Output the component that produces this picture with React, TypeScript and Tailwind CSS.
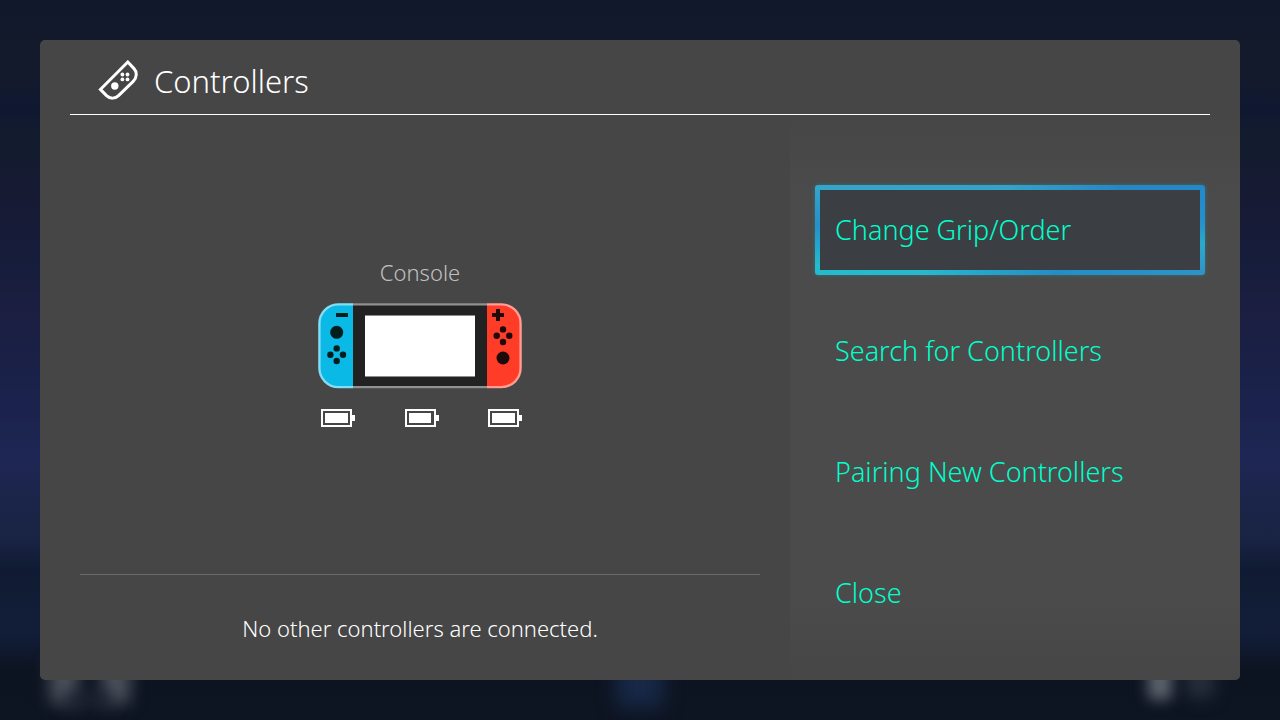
type Action = { label: string; active?: boolean };

const actions: Action[] = [
  { label: "Change Grip/Order", active: true },
  { label: "Search for Controllers" },
  { label: "Pairing New Controllers" },
  { label: "Close" },
];

function ControllerIcon() {
  return (
    <svg width="42" height="42" viewBox="0 0 42 42" fill="none" aria-hidden="true">
      <path
        d="M29.8 2 L2.4 29.4 L8.5 35.6 C12 39 17.2 39 20.8 35.4 L35.2 21.4 C39 17.6 39.2 12 36 8.6 Z"
        stroke="#fff"
        strokeWidth="3"
      />
      <circle cx="16.8" cy="26" r="3.7" fill="#fff" />
      <circle cx="24.4" cy="14.5" r="1.9" fill="#fff" />
      <circle cx="29.5" cy="14.5" r="1.9" fill="#fff" />
      <circle cx="24.4" cy="19.4" r="1.9" fill="#fff" />
      <circle cx="29.5" cy="19.4" r="1.9" fill="#fff" />
    </svg>
  );
}

function ConsoleDrawing() {
  return (
    <svg width="204" height="86" viewBox="0 0 204 86" role="img" aria-label="Console">
      <defs>
        <clipPath id="body">
          <rect x="0.3" y="0.3" width="203.4" height="84.9" rx="20" />
        </clipPath>
      </defs>
      <g clipPath="url(#body)">
        <rect width="204" height="86" fill="#222" />
        <rect width="35" height="86" fill="#0ab9e6" />
        <rect x="169" width="35" height="86" fill="#ff3c28" />
      </g>
      <rect x="1.4" y="1.4" width="201.2" height="82.7" rx="19" fill="none" stroke="#fff" strokeOpacity="0.5" strokeWidth="2.4" />
      <rect x="47" y="12" width="110" height="62" fill="#8c8c8c" />
      <rect x="47" y="13" width="110" height="60" fill="#fff" />
      <g fill="#001e1e">
        <rect x="18" y="10" width="12" height="4" />
        <circle cx="18.7" cy="29.3" r="6.5" />
        <circle cx="18.7" cy="45.4" r="3.2" />
        <circle cx="12.4" cy="51.7" r="3.2" />
        <circle cx="25" cy="51.7" r="3.2" />
        <circle cx="18.7" cy="58" r="3.2" />
      </g>
      <g fill="#1e0a0a">
        <path d="M178 6h4v4h4v4h-4v4h-4v-4h-4v-4h4z" />
        <circle cx="185" cy="26.4" r="3.2" />
        <circle cx="178.7" cy="32.7" r="3.2" />
        <circle cx="191.3" cy="32.7" r="3.2" />
        <circle cx="185" cy="39" r="3.2" />
        <circle cx="185" cy="55" r="6.5" />
      </g>
    </svg>
  );
}

function Battery({ level, label }: { level: number; label: string }) {
  return (
    <svg width="34" height="18" viewBox="0 0 34 18" role="img" aria-label={label}>
      <rect x="1" y="1" width="29" height="16" fill="none" stroke="#fff" strokeWidth="2" />
      <rect x="31" y="6" width="3" height="6" fill="#fff" />
      <rect x="4" y="4" width={level} height="10" fill="#fff" />
    </svg>
  );
}

function ActionButton({ label, active }: Action) {
  if (active) {
    return (
      <div className="rounded-[3px] bg-[linear-gradient(90deg,#33a6ca_0%,#32a3c9_50%,#2787c6_78%,#2388cc_100%),linear-gradient(90deg,#22bccd_0%,#28b8cd_28%,#238ec6_62%,#2f93c6_100%),linear-gradient(180deg,#33a6ca_0%,#2490cc_45%,#22bccd_90%),linear-gradient(180deg,#2388cc_0%,#2490cc_40%,#2ba8cd_65%,#2f93c6_100%)] bg-[size:100%_5px,100%_5px,5px_100%,5px_100%] bg-[position:top,bottom,left,right] bg-no-repeat p-[5px] shadow-[0_0_5px_rgba(40,170,190,0.35)]">
        <button
          type="button"
          className="flex h-20 w-full items-center bg-[#3b3f43] px-[15px] text-left text-[#0fc]"
        >
          {label}
        </button>
      </div>
    );
  }
  return (
    <button type="button" className="flex h-[90px] w-full items-center px-5 text-left text-[#0fc]">
      {label}
    </button>
  );
}

export default function App() {
  return (
    <div className="relative flex min-h-screen flex-col overflow-hidden bg-[linear-gradient(180deg,#11182b_0%,#131a2b_10%,#101831_15%,#121c2e_19%,#171a34_28%,#161d3b_36%,#1b1e41_43%,#1a2148_52%,#1c2450_60%,#1e2654_64%,#1b2547_70%,#192344_75%,#101b33_79%,#121d38_88%,#0d1421_93%,#0d1422_100%)] p-10 font-['Noto_Sans',sans-serif] font-light">
      <div aria-hidden="true" className="absolute bottom-[16px] left-[50px] h-11 w-7 rounded bg-[#4c525c] blur-[8px]" />
      <div aria-hidden="true" className="absolute bottom-[16px] left-[102px] h-11 w-7 rounded bg-[#4c525c] blur-[8px]" />
      <div aria-hidden="true" className="absolute bottom-[12px] left-[64px] h-4 w-12 rounded bg-[#1c2330] blur-[8px]" />
      <div aria-hidden="true" className="absolute bottom-[12px] left-1/2 h-12 w-12 -translate-x-1/2 rounded bg-[#172745] blur-[9px]" />
      <div aria-hidden="true" className="absolute right-[108px] bottom-[20px] h-9 w-6 rounded bg-[#5a626b] blur-[7px]" />
      <div aria-hidden="true" className="absolute right-[66px] bottom-[22px] h-8 w-7 rounded bg-[#262e3b] blur-[8px]" />

      <div className="relative flex flex-1 flex-col overflow-hidden rounded-[5px] bg-[#464646]">
        <header className="mx-[30px] flex h-[75px] items-center gap-[14px] border-b border-white pt-2 pl-7">
          <ControllerIcon />
          <h1 className="text-[31px] leading-10 text-white">Controllers</h1>
        </header>

        <div className="flex flex-1">
          <main className="flex flex-1 flex-col pr-[30px] pl-10">
            <section className="flex flex-1 flex-col items-center justify-center pb-[5px]">
              <h2 className="text-[22px] leading-7 text-[#c0c0c0]">Console</h2>
              <div className="mt-[17px] flex flex-col gap-5">
                <ConsoleDrawing />
                <div className="flex justify-between pl-[3px]">
                  <Battery level={23} label="Left controller battery" />
                  <Battery level={22} label="Console battery" />
                  <Battery level={23} label="Right controller battery" />
                </div>
              </div>
            </section>
            <p className="flex h-[106px] items-center justify-center border-t border-[#6a6a6a] pt-[2px] text-[22px] text-white">
              No other controllers are connected.
            </p>
          </main>

          <nav
            aria-label="Controller options"
            className="flex w-[450px] flex-col gap-[31px] bg-[linear-gradient(180deg,#464646_0%,#4b4b4b_14%,#4b4b4b_86%,#464646_100%)] pt-[70px] pr-[35px] pl-[25px] text-[27px] leading-10"
          >
            {actions.map((action) => (
              <ActionButton key={action.label} label={action.label} active={action.active} />
            ))}
          </nav>
        </div>
      </div>
    </div>
  );
}
